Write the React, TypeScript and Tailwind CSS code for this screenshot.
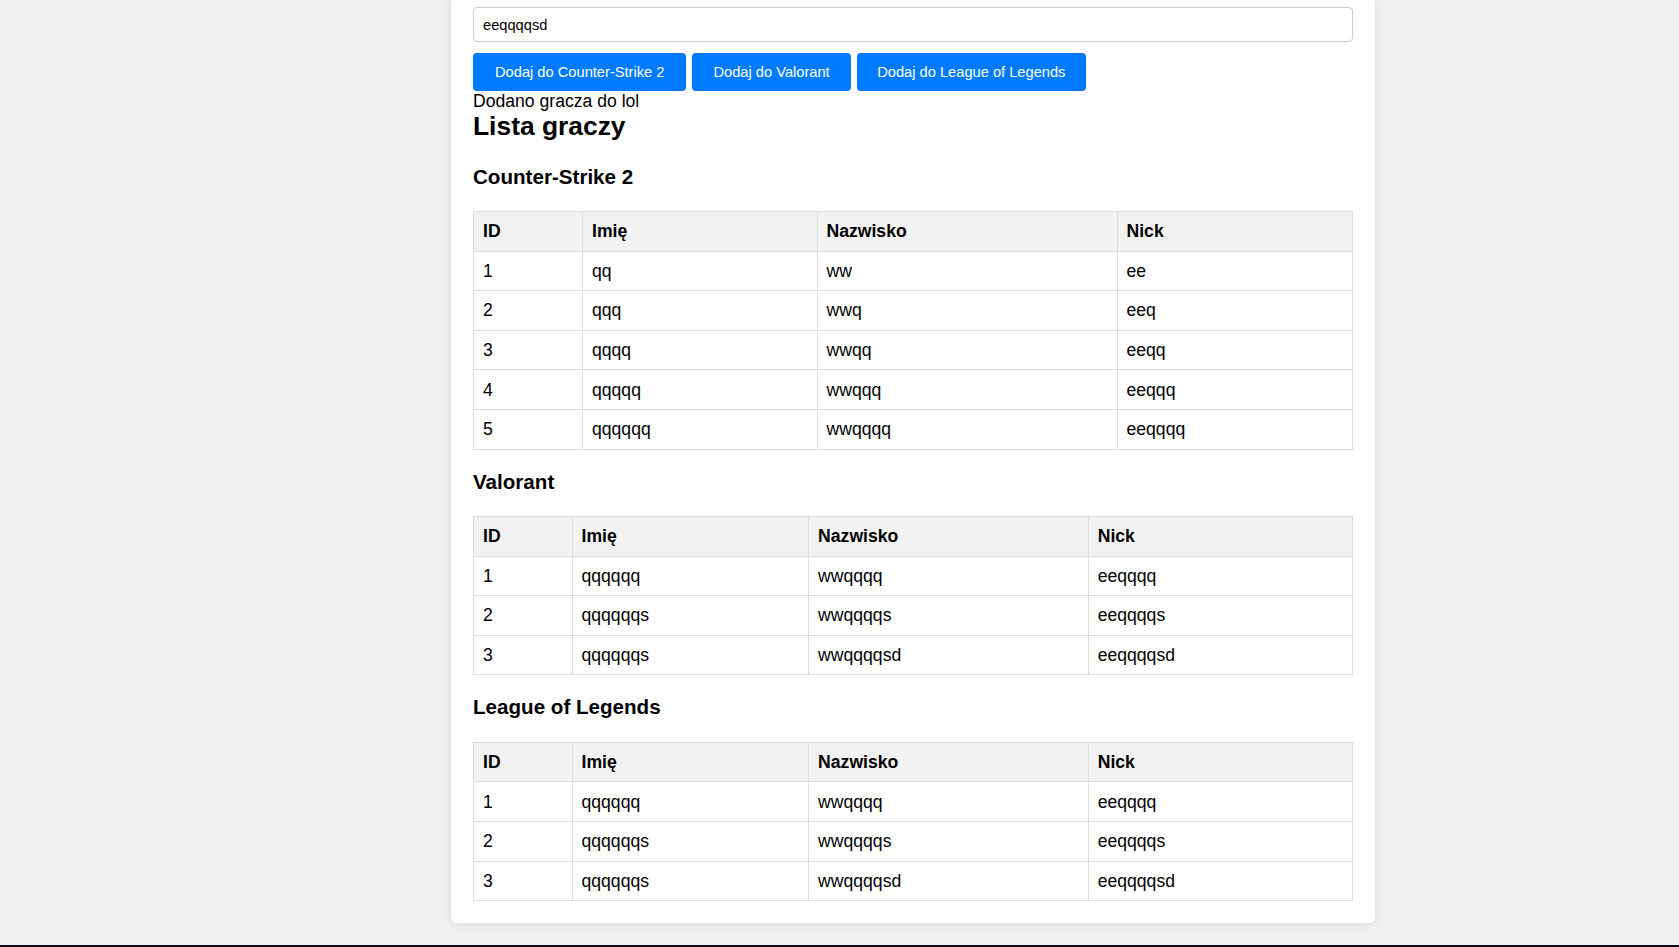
import React, { useState } from 'react';

type Player = { id: number; imie: string; nazwisko: string; nick: string };

const cs2Players: Player[] = [
  { id: 1, imie: 'qq', nazwisko: 'ww', nick: 'ee' },
  { id: 2, imie: 'qqq', nazwisko: 'wwq', nick: 'eeq' },
  { id: 3, imie: 'qqqq', nazwisko: 'wwqq', nick: 'eeqq' },
  { id: 4, imie: 'qqqqq', nazwisko: 'wwqqq', nick: 'eeqqq' },
  { id: 5, imie: 'qqqqqq', nazwisko: 'wwqqqq', nick: 'eeqqqq' },
];

const otherPlayers: Player[] = [
  { id: 1, imie: 'qqqqqq', nazwisko: 'wwqqqq', nick: 'eeqqqq' },
  { id: 2, imie: 'qqqqqqs', nazwisko: 'wwqqqqs', nick: 'eeqqqqs' },
  { id: 3, imie: 'qqqqqqs', nazwisko: 'wwqqqqsd', nick: 'eeqqqqsd' },
];

interface PlayerTableProps {
  players: Player[];
  widths: string[];
}

const cell = 'border border-[#ddd] px-[9px] h-[39.6px] text-left align-middle';

const PlayerTable: React.FC<PlayerTableProps> = ({ players, widths }) => (
  <table className="w-full table-fixed border-collapse text-[17.6px] leading-[20px]">
    <colgroup>
      {widths.map((w, i) => (
        <col key={i} className={w} />
      ))}
    </colgroup>
    <thead>
      <tr className="bg-[#f2f2f2]">
        <th className={`${cell} font-bold`}>ID</th>
        <th className={`${cell} font-bold`}>Imię</th>
        <th className={`${cell} font-bold`}>Nazwisko</th>
        <th className={`${cell} font-bold`}>Nick</th>
      </tr>
    </thead>
    <tbody>
      {players.map((p) => (
        <tr key={p.id}>
          <td className={cell}>{p.id}</td>
          <td className={cell}>{p.imie}</td>
          <td className={cell}>{p.nazwisko}</td>
          <td className={cell}>{p.nick}</td>
        </tr>
      ))}
    </tbody>
  </table>
);

const csWidths = ['w-[109px]', 'w-[234.5px]', 'w-[300px]', ''];
const otherWidths = ['w-[98.5px]', 'w-[236.6px]', 'w-[279.6px]', ''];

export default function App() {
  const [value, setValue] = useState('eeqqqqsd');

  return (
    <div className="h-[947px] overflow-hidden bg-[#f0f0f0] flex flex-col font-['Liberation_Sans',Arial,sans-serif] text-black">
      <div className="flex-1">
        <div className="ml-[451px] w-[924px] bg-white px-[22px] pt-[7px] pb-[22px] rounded-b-[5px] shadow-[0_0_11px_rgba(0,0,0,0.1)]">
          <input
            value={value}
            onChange={(e) => setValue(e.target.value)}
            className="block w-full h-[35px] border border-[#ccc] rounded-[4px] px-[9px] text-[14.67px] outline-none"
          />
          <div className="mt-[11px] flex gap-[6px]">
            <button className="h-[38px] px-[22px] bg-[#007bff] text-white text-[14.67px] rounded-[4px]">
              Dodaj do Counter-Strike 2
            </button>
            <button className="h-[38px] px-[21px] bg-[#007bff] text-white text-[14.67px] rounded-[4px]">
              Dodaj do Valorant
            </button>
            <button className="h-[38px] px-[20.5px] bg-[#007bff] text-white text-[14.67px] rounded-[4px]">
              Dodaj do League of Legends
            </button>
          </div>
          <div className="mt-[1px] text-[17.6px] leading-[19px]">Dodano gracza do lol</div>
          <h2 className="text-[26.4px] leading-[30px] font-bold">Lista graczy</h2>

          <h3 className="mt-[24px] mb-[22px] text-[20.6px] leading-[24px] font-bold">Counter-Strike 2</h3>
          <PlayerTable players={cs2Players} widths={csWidths} />

          <h3 className="mt-[20px] mb-[22.4px] text-[20.6px] leading-[24px] font-bold">Valorant</h3>
          <PlayerTable players={otherPlayers} widths={otherWidths} />

          <h3 className="mt-[20px] mb-[22.4px] text-[20.6px] leading-[24px] font-bold">League of Legends</h3>
          <PlayerTable players={otherPlayers} widths={otherWidths} />
        </div>
      </div>
      <div className="h-[2px] bg-[#0b0b1a]" />
    </div>
  );
}
